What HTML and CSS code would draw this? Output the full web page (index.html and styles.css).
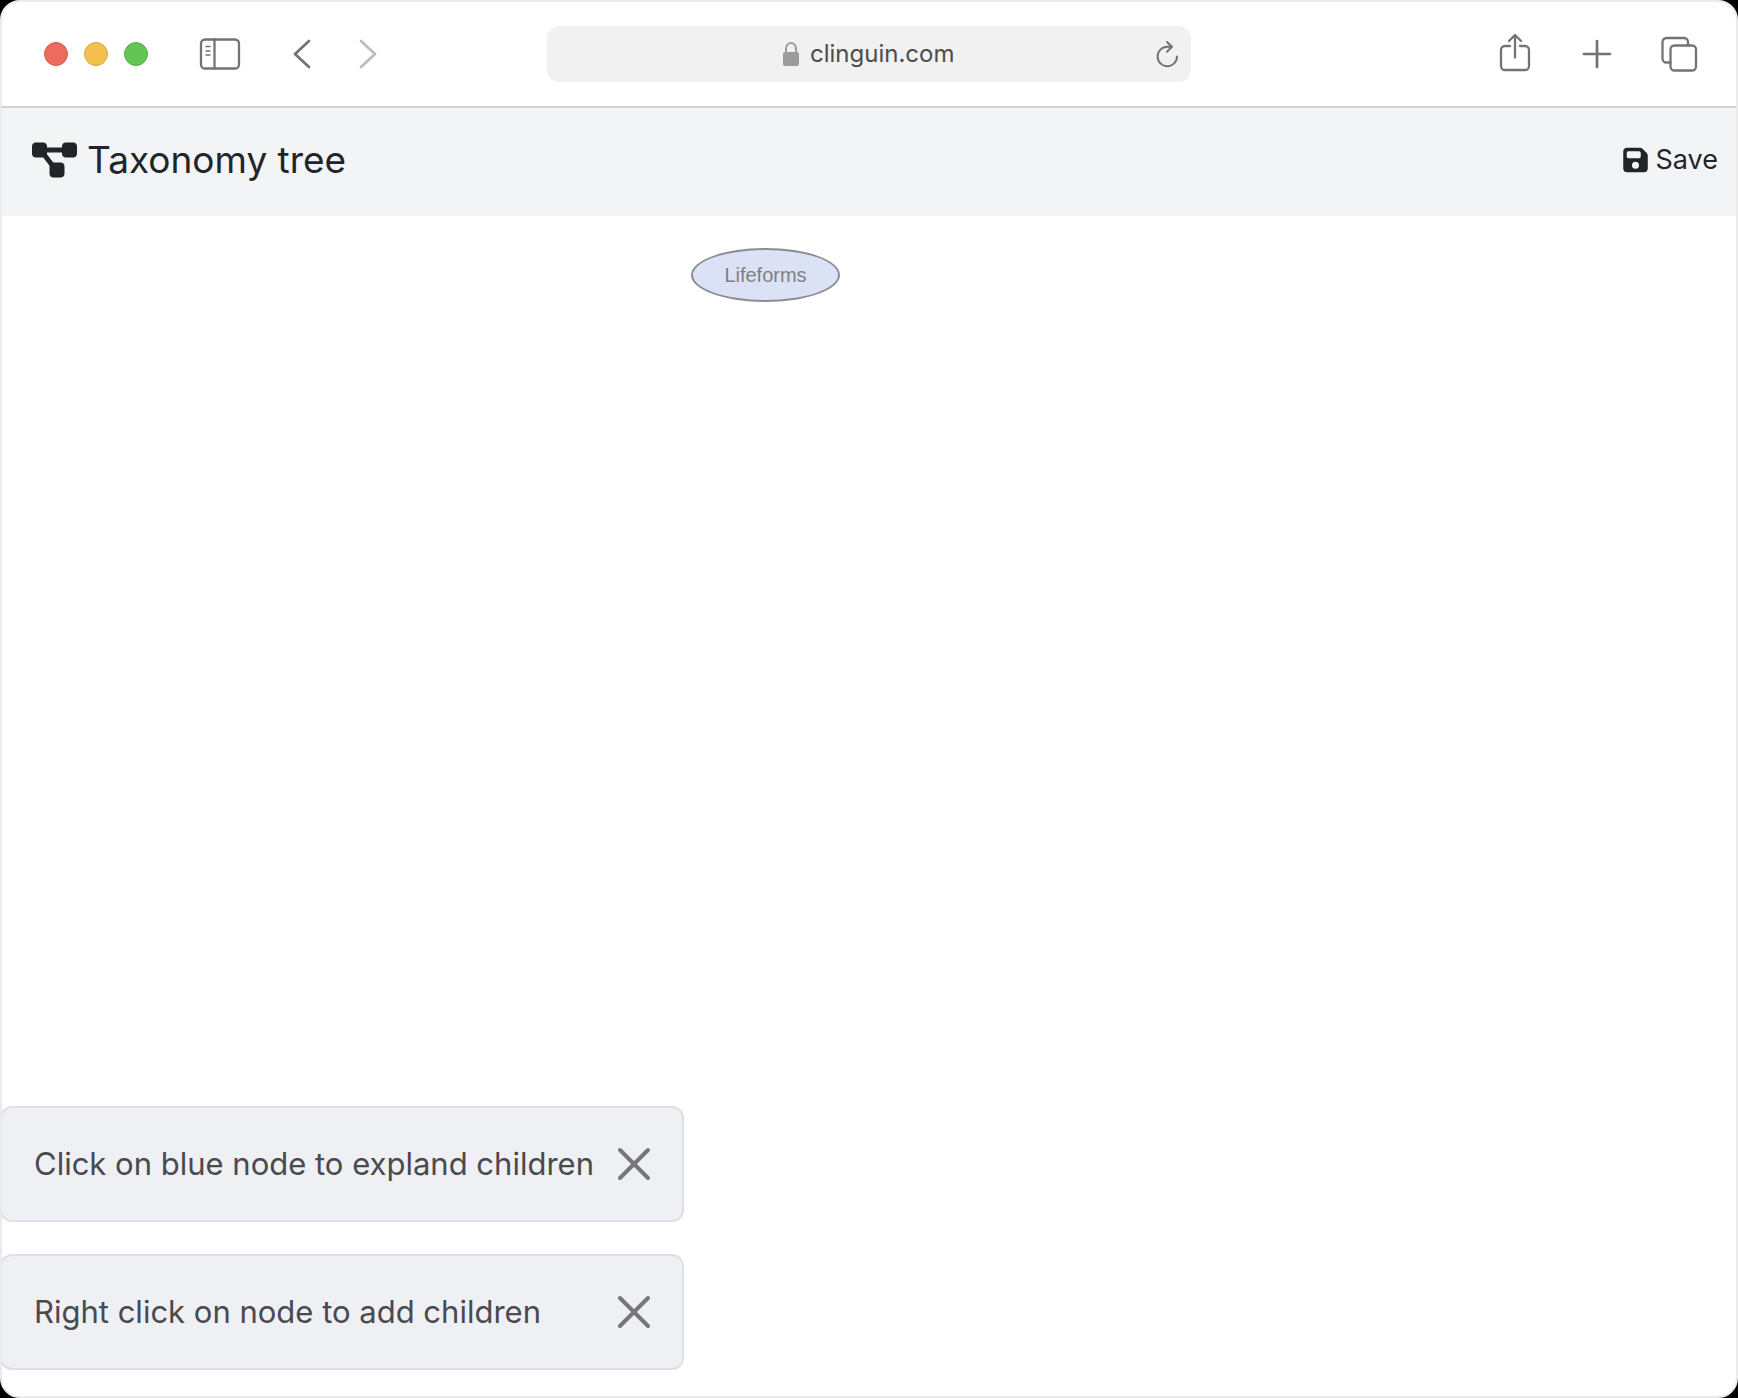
FILE: index.html
```html
<!DOCTYPE html>
<html lang="en">
<head>
<meta charset="utf-8">
<meta name="viewport" content="width=device-width, initial-scale=1">
<title>Taxonomy tree</title>
<link rel="stylesheet" href="styles.css">
</head>
<body>
<div class="window">
  <div class="toolbar">
    <div class="toolbar-left">
      <div class="lights">
        <button class="light red" aria-label="Close"></button>
        <button class="light yellow" aria-label="Minimize"></button>
        <button class="light green" aria-label="Zoom"></button>
      </div>
      <button class="tool" aria-label="Sidebar">
        <svg width="40" height="40" viewBox="0 0 40 40"><rect x="1" y="5.500" width="38" height="29" rx="4"/><path d="M14.500 5.500v29"/><path class="thin" d="M6 12.500h4M6 17h4M6 21h4"/></svg>
      </button>
      <div class="history">
        <button class="tool narrow" aria-label="Back">
          <svg width="20" height="40" viewBox="0 0 20 40"><path class="bold" d="M17 7 3 20l14 13"/></svg>
        </button>
        <button class="tool narrow faded" aria-label="Forward">
          <svg width="20" height="40" viewBox="0 0 20 40"><path class="bold" d="m3 7 14 13L3 33"/></svg>
        </button>
      </div>
    </div>
    <div class="address">
      <label class="site">
        <svg width="18" height="26" viewBox="0 0 18 26"><rect class="lock-body" x="1" y="11" width="16" height="14" rx="2"/><path class="lock-arc" d="M4 11.500V7.500a5 5.500 0 0 1 10 0v4"/></svg>
        <input class="url" type="text" value="clinguin.com" aria-label="Address">
      </label>
      <button class="reload" aria-label="Reload">
        <svg width="24" height="28" viewBox="0 0 24 28"><path d="M22 16.500a9.700 9.700 0 1 1-9.700-9.700h4.500M12 2l5 4.800-5 5"/></svg>
      </button>
    </div>
    <div class="toolbar-right">
      <button class="tool" aria-label="Share">
        <svg width="40" height="40" viewBox="0 0 40 40"><path d="M15 12h-5a4 4 0 0 0-4 4v16a4 4 0 0 0 4 4h20a4 4 0 0 0 4-4V16a4 4 0 0 0-4-4h-5M20 23.500V1.500M14 7l6-6 6 6"/></svg>
      </button>
      <button class="tool" aria-label="New tab">
        <svg width="40" height="40" viewBox="0 0 40 40"><path class="bold" d="M20 7v26M7 20h26"/></svg>
      </button>
      <button class="tool" aria-label="Tab overview">
        <svg width="40" height="40" viewBox="0 0 40 40"><rect x="11.500" y="11.500" width="25.500" height="25" rx="4"/><path d="M11.500 28.500H7.500a4 4 0 0 1-4-4V8a4 4 0 0 1 4-4h17.500a4 4 0 0 1 4 4v3.500"/></svg>
      </button>
    </div>
  </div>

  <header class="header">
    <h1 class="title">
      <svg width="45" height="40" viewBox="0 0 576 512"><path d="M0 80C0 53.500 21.500 32 48 32l96 0c26.500 0 48 21.500 48 48l0 16 192 0 0-16c0-26.500 21.500-48 48-48l96 0c26.500 0 48 21.500 48 48l0 96c0 26.500-21.500 48-48 48l-96 0c-26.500 0-48-21.500-48-48l0-16-192 0 0 16c0 1.700-.1 3.400-.3 5L272 288l96 0c26.500 0 48 21.500 48 48l0 96c0 26.500-21.500 48-48 48l-96 0c-26.500 0-48-21.500-48-48l0-96c0-1.700 .1-3.400 .3-5L144 224l-96 0c-26.500 0-48-21.500-48-48L0 80z"/></svg>
      <span>Taxonomy tree</span>
    </h1>
    <button class="save">
      <svg width="25" height="28" viewBox="0 0 448 512"><path d="M64 32C28.700 32 0 60.700 0 96L0 416c0 35.300 28.700 64 64 64l320 0c35.300 0 64-28.700 64-64l0-242.700c0-17-6.700-33.300-18.700-45.300L352 50.700C340 38.700 323.700 32 306.700 32L64 32zm0 96c0-17.700 14.300-32 32-32l192 0c17.700 0 32 14.300 32 32l0 64c0 17.700-14.300 32-32 32L96 224c-17.700 0-32-14.300-32-32l0-64zM224 288a64 64 0 1 1 0 128 64 64 0 1 1 0-128z"/></svg>
      <span>Save</span>
    </button>
  </header>

  <main class="canvas">
    <button class="node">Lifeforms</button>
    <div class="messages">
      <div class="message" role="alert">
        <span>Click on blue node to expland children</span>
        <button class="dismiss" aria-label="Dismiss"><svg width="32" height="32" viewBox="0 0 32 32"><path d="m2 2 28 28M30 2 2 30"/></svg></button>
      </div>
      <div class="message" role="alert">
        <span>Right click on node to add children</span>
        <button class="dismiss" aria-label="Dismiss"><svg width="32" height="32" viewBox="0 0 32 32"><path d="m2 2 28 28M30 2 2 30"/></svg></button>
      </div>
    </div>
  </main>
</div>
</body>
</html>
```

FILE: styles.css
```css
* {
  box-sizing: border-box;
}

body {
  margin: 0;
  background: #000;
  color: #212529;
  font-family: Inter, "Liberation Sans", sans-serif;
}

button {
  display: block;
  padding: 0;
  border: 0;
  background: none;
  color: inherit;
  font: inherit;
}

svg {
  display: block;
  flex: none;
}

.window {
  display: flex;
  flex-direction: column;
  min-height: 100vh;
  border: 2px solid #ebebeb;
  border-radius: 20px;
  background: #fff;
  overflow: hidden;
}

/* Browser toolbar */
.toolbar {
  display: grid;
  grid-template-columns: 1fr minmax(0, 644px) 1fr;
  align-items: center;
  padding: 24px 37px;
  border-bottom: 2px solid #d1d2d3;
}

.toolbar-left,
.toolbar-right,
.lights,
.history {
  display: flex;
  align-items: center;
}

.toolbar-left {
  gap: 52px;
  padding-left: 5px;
}

.toolbar-right {
  justify-content: flex-end;
  gap: 42px;
}

.lights {
  gap: 16px;
}

.history {
  gap: 46px;
}

.light {
  width: 24px;
  height: 24px;
  border: 1px solid;
  border-radius: 50%;
}

.red {
  border-color: #d35a50;
  background: #ed6a5f;
}

.yellow {
  border-color: #d8a344;
  background: #f5bf4f;
}

.green {
  border-color: #56ae47;
  background: #62c655;
}

.tool svg,
.reload svg,
.dismiss svg {
  fill: none;
  stroke: #737373;
  stroke-width: 2.300;
  stroke-linecap: round;
  stroke-linejoin: round;
  overflow: visible;
}

.reload svg {
  stroke-width: 2;
}

.tool .thin {
  stroke-width: 1.500;
}

.tool .bold {
  stroke-width: 2.700;
}

.faded svg {
  stroke: #bdbdbd;
}

.address {
  display: grid;
  grid-template-columns: 1fr auto 1fr;
  align-items: center;
  height: 56px;
  padding: 0 12px;
  border-radius: 12px;
  background: #f1f1f1;
}

.site {
  display: flex;
  grid-column: 2;
  align-items: center;
  gap: 10px;
}

.lock-body {
  fill: #9c9c9c;
}

.lock-arc {
  fill: none;
  stroke: #9c9c9c;
  stroke-width: 2;
}

.url {
  width: 146px;
  padding: 0;
  border: 0;
  background: none;
  color: #4c4c4c;
  font-family: inherit;
  font-size: 24px;
  line-height: 32px;
}

.reload {
  justify-self: end;
}

/* Application header */
.header {
  display: flex;
  align-items: center;
  justify-content: space-between;
  padding: 22px 18px 26px 30px;
  background: #f3f4f6;
}

.title {
  display: flex;
  align-items: center;
  gap: 10px;
  margin: 0;
  font-size: 37px;
  font-weight: 400;
  line-height: 60px;
}

.save {
  display: flex;
  align-items: center;
  gap: 8px;
  font-size: 27px;
  line-height: 40px;
}

.title svg,
.save svg {
  fill: #212529;
}

/* Graph area */
.canvas {
  position: relative;
  display: flex;
  flex: 1;
  flex-direction: column;
  justify-content: flex-end;
}

.node {
  position: absolute;
  top: 32px;
  left: 689px;
  width: 149px;
  height: 54px;
  border: 2px solid #8c8d92;
  border-radius: 50%;
  background: #dce2f5;
  color: #808080;
  font-family: "Liberation Sans", sans-serif;
  font-size: 20px;
}

.messages {
  display: flex;
  flex-direction: column;
  gap: 32px;
  width: 684px;
  max-width: 100%;
  margin: 120px 0 26px -2px;
}

.message {
  display: flex;
  align-items: center;
  justify-content: space-between;
  min-height: 116px;
  padding: 32px;
  border: 2px solid #dfe0e5;
  border-radius: 12px;
  background: #eff0f3;
  color: #494a4f;
  font-size: 31px;
  line-height: 48px;
}

.dismiss svg {
  stroke: #777;
  stroke-width: 4;
}
```
